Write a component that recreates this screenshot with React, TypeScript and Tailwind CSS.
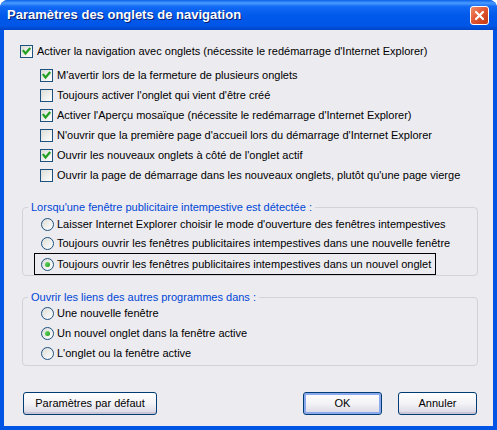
import React from "react";

const FONT = { fontFamily: '"Liberation Sans", Arial, sans-serif' };

function Check({ checked }: { checked: boolean }) {
  return (
    <span className="relative inline-block w-[13px] h-[13px] shrink-0 border border-[#1C5180] bg-gradient-to-br from-[#DCDCD7] to-white">
      {checked && (
        <svg className="absolute inset-0" width="11" height="11" viewBox="0 0 11 11">
          <path d="M2.5 5 L4.5 7.5 L8.5 2.8" fill="none" stroke="#21A121" strokeWidth="2.2" strokeLinecap="square" />
        </svg>
      )}
    </span>
  );
}

function Radio({ checked }: { checked: boolean }) {
  return (
    <span className="relative inline-flex items-center justify-center w-[13px] h-[13px] shrink-0 rounded-full border border-[#1C5180] bg-gradient-to-br from-[#DCDCD7] to-white">
      {checked && <span className="w-[5px] h-[5px] rounded-full bg-gradient-to-br from-[#6EDC6A] to-[#169C16]" />}
    </span>
  );
}

function CheckRow({ checked, label, sub }: { checked: boolean; label: string; sub?: boolean }) {
  return (
    <div className={`flex items-center h-[20px] ${sub ? "pl-[36px]" : "pl-[16px]"}`}>
      <Check checked={checked} />
      <span className="ml-[4px] whitespace-nowrap">{label}</span>
    </div>
  );
}

function RadioRow({ checked, label, focus, h }: { checked: boolean; label: string; focus?: boolean; h: string }) {
  if (focus) {
    return (
      <div className={`flex items-center ${h} pl-[11px]`}>
        <div className="flex items-center h-full border border-black pl-[6px] pr-[4px]">
          <Radio checked={checked} />
          <span className="ml-[3px] whitespace-nowrap">{label}</span>
        </div>
      </div>
    );
  }
  return (
    <div className={`flex items-center ${h} pl-[18px]`}>
      <Radio checked={checked} />
      <span className="ml-[3px] whitespace-nowrap">{label}</span>
    </div>
  );
}

function Group({ legend, children, pt }: { legend: string; children: React.ReactNode; pt: string }) {
  return (
    <div className={`relative ml-[18px] w-[456px] h-[69px] border border-[#D3D2D8] rounded-[4px] ${pt}`}>
      <span className="absolute -top-[9px] left-[5px] px-[3px] bg-[#ECEBF0] text-[#0046D5] whitespace-nowrap leading-[16px]">
        {legend}
      </span>
      {children}
    </div>
  );
}

function Button({ label, def, w }: { label: string; def?: boolean; w: string }) {
  return (
    <div className={`${w} h-[23px] rounded-[3px] border border-[#003C74] bg-gradient-to-b from-white via-[#F3F2F6] to-[#D9D7E3] flex items-center justify-center ${def ? "shadow-[inset_0_0_0_2px_#8AA8EE]" : "shadow-[inset_0_-2px_0_#C8C6D6]"}`}>
      <span className="whitespace-nowrap">{label}</span>
    </div>
  );
}

export default function App() {
  return (
    <div className="w-[497px] h-[430px] bg-white" style={FONT}>
      <div className="w-[497px] h-[430px] rounded-t-[8px] bg-[#0055E5] flex flex-col overflow-hidden">
        <div className="h-[30px] shrink-0 flex items-center justify-between pl-[7px] pr-[8px] bg-[linear-gradient(to_bottom,#0A5FE8_0%,#4A9BFF_10%,#1269F4_22%,#0058EA_55%,#0056E6_85%,#0045C8_100%)]">
          <span className="text-white font-bold text-[13px] [text-shadow:1px_1px_0_#0A1E6E]">
            Paramètres des onglets de navigation
          </span>
          <div className="w-[19px] h-[19px] rounded-[3px] border border-white bg-gradient-to-br from-[#F08C66] via-[#E0532F] to-[#C23A14] flex items-center justify-center">
            <svg width="11" height="11" viewBox="0 0 11 11">
              <path d="M2 2 L9 9 M9 2 L2 9" stroke="white" strokeWidth="2.2" strokeLinecap="round" />
            </svg>
          </div>
        </div>
        <div className="flex-1 mx-[4px] mb-[4px] bg-[#ECEBF0] text-[11px] text-black flex flex-col pt-[11px]">
          <CheckRow checked label="Activer la navigation avec onglets (nécessite le redémarrage d'Internet Explorer)" />
          <div className="h-[4px]" />
          <CheckRow sub checked label="M'avertir lors de la fermeture de plusieurs onglets" />
          <CheckRow sub checked={false} label="Toujours activer l'onglet qui vient d'être créé" />
          <CheckRow sub checked label="Activer l'Aperçu mosaïque (nécessite le redémarrage d'Internet Explorer)" />
          <CheckRow sub checked={false} label="N'ouvrir que la première page d'accueil lors du démarrage d'Internet Explorer" />
          <CheckRow sub checked label="Ouvrir les nouveaux onglets à côté de l'onglet actif" />
          <CheckRow sub checked={false} label="Ouvrir la page de démarrage dans les nouveaux onglets, plutôt qu'une page vierge" />
          <div className="h-[22px]" />
          <Group legend="Lorsqu'une fenêtre publicitaire intempestive est détectée :" pt="pt-[7px]">
            <RadioRow h="h-[19px]" checked={false} label="Laisser Internet Explorer choisir le mode d'ouverture des fenêtres intempestives" />
            <RadioRow h="h-[19px]" checked={false} label="Toujours ouvrir les fenêtres publicitaires intempestives dans une nouvelle fenêtre" />
            <RadioRow h="h-[22px]" focus checked label="Toujours ouvrir les fenêtres publicitaires intempestives dans un nouvel onglet" />
          </Group>
          <div className="h-[21px]" />
          <Group legend="Ouvrir les liens des autres programmes dans :" pt="pt-[5px]">
            <RadioRow h="h-[20px]" checked={false} label="Une nouvelle fenêtre" />
            <RadioRow h="h-[20px]" checked label="Un nouvel onglet dans la fenêtre active" />
            <RadioRow h="h-[20px]" checked={false} label="L'onglet ou la fenêtre active" />
          </Group>
          <div className="flex items-center mt-[26px] pl-[19px] pr-[16px]">
            <Button w="w-[134px]" label="Paramètres par défaut" />
            <div className="flex-1" />
            <Button w="w-[79px]" def label="OK" />
            <div className="w-[16px]" />
            <Button w="w-[79px]" label="Annuler" />
          </div>
        </div>
      </div>
    </div>
  );
}
